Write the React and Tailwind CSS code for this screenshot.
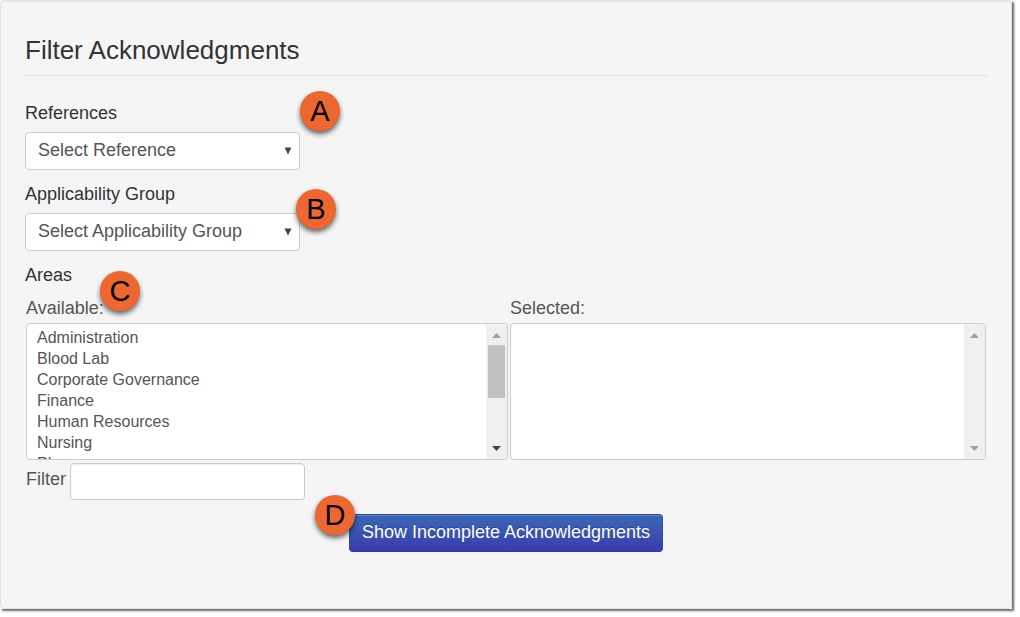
import React from 'react';

const areas = [
  'Administration',
  'Blood Lab',
  'Corporate Governance',
  'Finance',
  'Human Resources',
  'Nursing',
  'Pharmacy',
  'Radiology',
];

function Marker({ letter, className }) {
  return (
    <span
      className={`absolute z-10 flex size-10 items-center justify-center rounded-full bg-[#ed6732] text-[29px] leading-10 text-black shadow-[0_3px_5px_rgba(0,0,0,0.6)] ${className}`}
    >
      {letter}
    </span>
  );
}

function SelectField({ id, label, placeholder, children }) {
  return (
    <div className="relative w-[275px]">
      <label htmlFor={id} className="mb-1.5 block leading-[26px] text-[#333]">
        {label}
      </label>
      <div className="relative">
        <select
          id={id}
          className="block h-[38px] w-full appearance-none rounded-[4px] border border-[#ccc] bg-white pb-0.5 pl-3 text-[#555]"
        >
          <option>{placeholder}</option>
        </select>
        <svg className="pointer-events-none absolute top-[15px] right-2 h-2 w-2" viewBox="0 0 8 8">
          <path d="M0.5 0.5h7L4 7.5z" fill="#444" />
        </svg>
      </div>
      {children}
    </div>
  );
}

function ListBox({ id, label, items, children }) {
  const scrolls = items.length > 0;
  return (
    <div className="relative">
      <label htmlFor={id} className="mb-[3px] block leading-6">
        {label}
      </label>
      <div className="flex h-[137px] overflow-hidden rounded-[4px] border border-[#ccc] bg-white">
        <select
          id={id}
          multiple
          className="min-w-0 flex-1 overflow-y-scroll pt-[5px] pl-2 text-base [scrollbar-width:none]"
        >
          {items.map((item) => (
            <option key={item} className="h-[21px] min-h-0 px-0.5 py-0 leading-[21px]">
              {item}
            </option>
          ))}
        </select>
        {/* Scrollbar */}
        <div className="flex w-[21px] flex-col items-start bg-[#f0f0f0] pt-[9px] pb-2 pl-0.5">
          <svg className="ml-1 h-[5px] w-[9px]" viewBox="0 0 9 5">
            <path d="M0 5L4.5 0 9 5z" fill="#a0a0a0" />
          </svg>
          {scrolls && <div className="mt-[7px] h-[53px] w-[17px] bg-[#c1c1c1]" />}
          <svg className="mt-auto ml-1 h-[5px] w-[9px]" viewBox="0 0 9 5">
            <path d="M0 0h9L4.5 5z" fill={scrolls ? '#444' : '#a0a0a0'} />
          </svg>
        </div>
      </div>
      {children}
    </div>
  );
}

export default function App() {
  return (
    <div className="bg-white pr-2 pb-2 font-['Liberation_Sans',Arial,sans-serif] text-[18px] text-[#555]">
      <div className="shadow-[2px_2px_2px_rgba(0,0,0,0.6)]">
        <form className="rounded-[4px] border border-[#e3e3e3] bg-[#f5f5f5] px-6 pt-6 pb-14 shadow-[inset_0_1px_1px_rgba(0,0,0,0.05)]">
          <h1 className="mb-6 border-b border-[#e3e3e3] text-[26px] leading-[50px] text-[#333]">
            Filter Acknowledgments
          </h1>

          <div className="flex flex-col gap-[11px]">
            <SelectField id="reference" label="References" placeholder="Select Reference">
              <Marker letter="A" className="top-[-9px] -right-10" />
            </SelectField>
            <SelectField
              id="group"
              label="Applicability Group"
              placeholder="Select Applicability Group"
            >
              <Marker letter="B" className="top-2 -right-9" />
            </SelectField>
            <h2 className="leading-[26px] text-[#333]">Areas</h2>
          </div>

          <div className="mt-2 grid grid-cols-[482fr_476fr] gap-0.5 px-px">
            <ListBox id="available" label="Available:" items={areas}>
              <Marker letter="C" className="top-[-25px] left-[74px]" />
            </ListBox>
            <ListBox id="selected" label="Selected:" items={[]} />
          </div>

          <div className="mt-[3px] flex gap-1 px-px">
            <label htmlFor="filter" className="leading-8">
              Filter
            </label>
            <input
              id="filter"
              type="text"
              className="h-[37px] w-[235px] rounded-[4px] border border-[#ccc] bg-white px-3 shadow-[inset_0_1px_1px_rgba(0,0,0,0.075)]"
            />
          </div>

          <div className="mt-3.5 flex justify-center">
            <div className="relative">
              <button
                type="button"
                className="h-[38px] w-[314px] rounded-[4px] border border-[#2f4aa0] border-b-[#3434a0] bg-linear-to-b from-[#3a68b5] to-[#3a3aae] pb-0.5 whitespace-nowrap text-white shadow-[inset_0_1px_0_rgba(255,255,255,0.2)] [text-shadow:0_-1px_0_rgba(0,0,0,0.25)]"
              >
                Show Incomplete Acknowledgments
              </button>
              <Marker letter="D" className="top-[-19px] left-[-34px]" />
            </div>
          </div>
        </form>
      </div>
    </div>
  );
}
